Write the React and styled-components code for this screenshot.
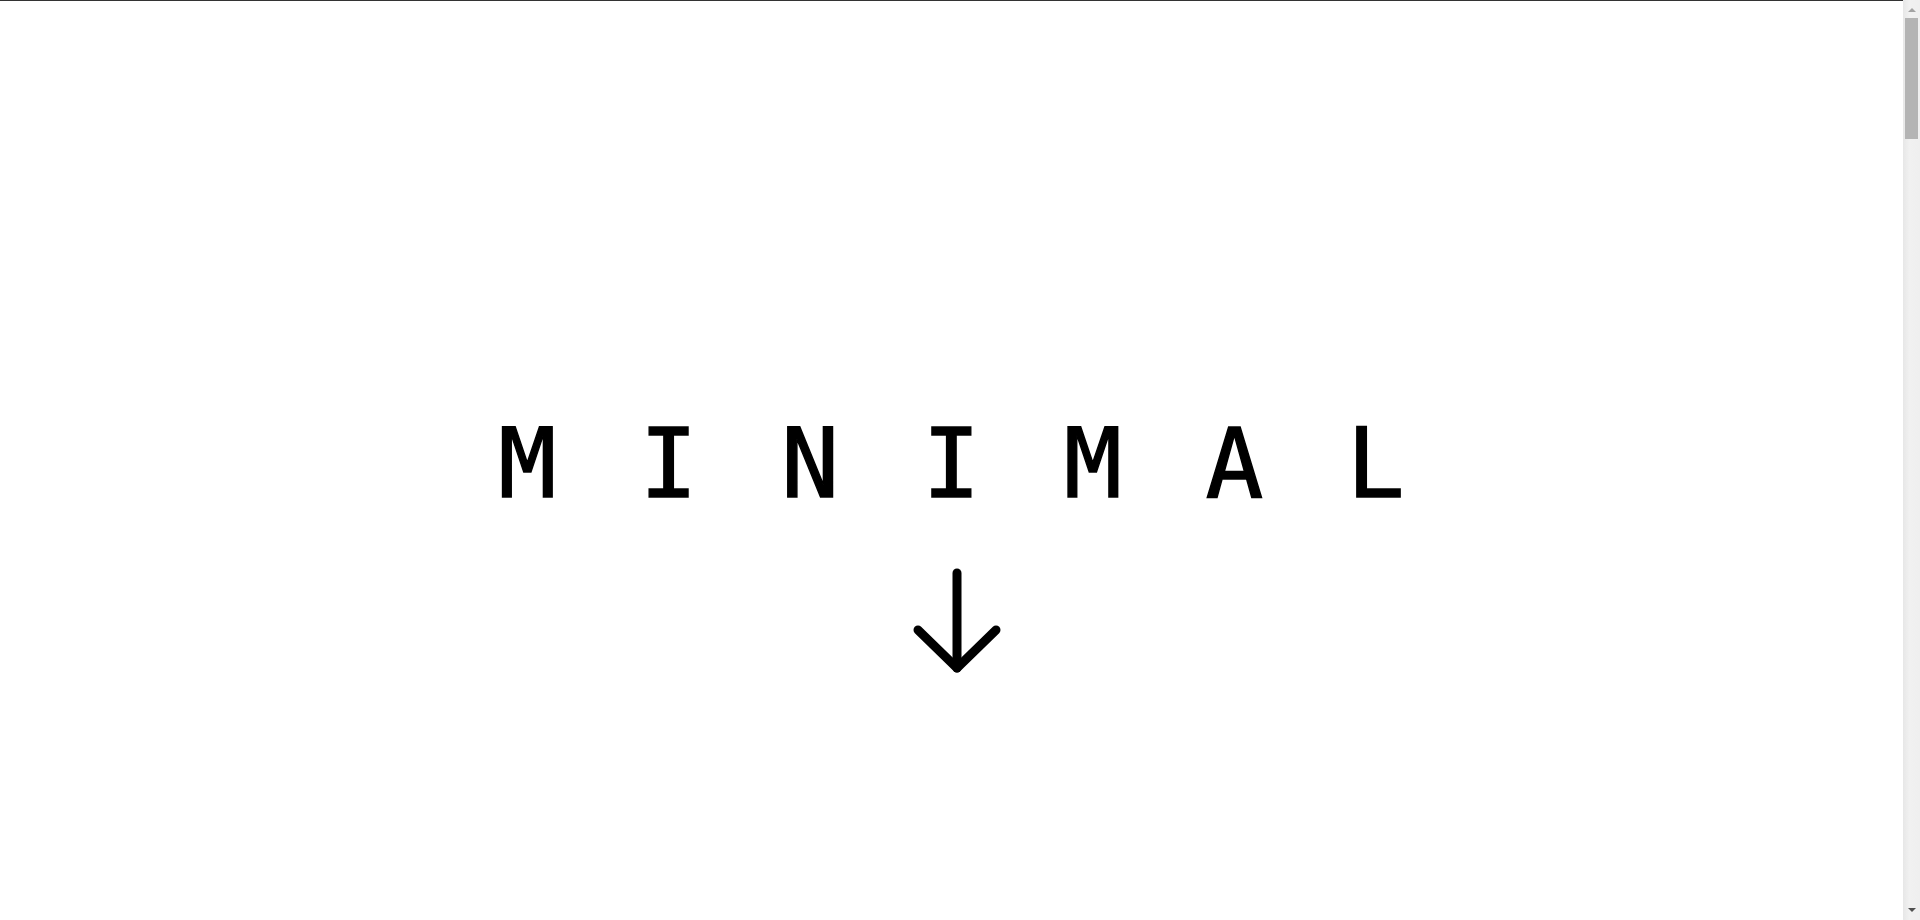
import React from "react";
import styled, { createGlobalStyle } from "styled-components";

const GlobalStyle = createGlobalStyle`
  html, body {
    margin: 0;
    padding: 0;
    height: 100%;
    overflow: hidden;
    background: #ffffff;
  }
  body {
    font-family: "DejaVu Sans Mono", monospace;
    color: #000000;
  }
`;

const Scroller = styled.div`
  height: 100vh;
  overflow-y: auto;
  overflow-x: hidden;
`;

const Page = styled.main`
  width: 100%;
  min-height: 6735px;
  display: flex;
  flex-direction: column;
  border-top: 1px solid #333333;
  padding-right: 17px;
  box-sizing: border-box;
`;

const Hero = styled.section`
  height: 919px;
  display: flex;
  flex-direction: column;
  align-items: center;
  padding-top: 415px;
  box-sizing: border-box;
`;

const Title = styled.h1`
  margin: 0;
  font-family: "DejaVu Sans Mono", monospace;
  font-weight: 400;
  font-size: 96px;
  line-height: 1;
  letter-spacing: 83.6px;
  padding-left: 83.6px;
  text-transform: uppercase;
  color: #000;
  -webkit-text-stroke: 1.4px #000;
`;

const ScrollArrow = styled.a`
  display: block;
  margin-top: 56px;
  margin-left: 11px;
  width: 90px;
  height: 106px;
  color: #000;
  cursor: pointer;
`;

const Below = styled.section`
  flex: 1;
`;

/* scrollbar drawn over the right edge, as in the reference */
const Rail = styled.div`
  position: fixed;
  top: 0;
  right: 0;
  bottom: 0;
  width: 17px;
  display: flex;
  flex-direction: column;
  background: linear-gradient(to right, #e7e7e7, #f1f1f1 40%, #efefef);
  z-index: 10;
`;

const RailButton = styled.div`
  height: 17px;
  display: flex;
  align-items: center;
  justify-content: center;

  &::after {
    content: "";
    width: 0;
    height: 0;
    border-left: 4px solid transparent;
    border-right: 4px solid transparent;
    ${(p) =>
      p.$dir === "up"
        ? "border-bottom: 4px solid #a3a3a3; margin-top: 2px;"
        : "border-top: 4px solid #505050; margin-top: -4px;"}
  }
`;

const Track = styled.div`
  flex: 1;
  padding: 1px 2px 0;
`;

const Thumb = styled.div`
  height: 121px;
  background: #b4b4b4;
`;

const ArrowDown = () => (
  <svg width="90" height="106" viewBox="0 0 90 106" fill="none" stroke="currentColor" strokeWidth="9" strokeLinecap="round" strokeLinejoin="round">
    <path d="M45 5 V100" />
    <path d="M6 62 L45 100 L84 62" />
  </svg>
);

export default function App() {
  return (
    <>
      <GlobalStyle />
      <Scroller>
        <Page>
          <Hero>
            <Title>Minimal</Title>
            <ScrollArrow href="#content" aria-label="Scroll down">
              <ArrowDown />
            </ScrollArrow>
          </Hero>
          <Below id="content" />
        </Page>
      </Scroller>
      <Rail aria-hidden="true">
        <RailButton $dir="up" />
        <Track>
          <Thumb />
        </Track>
        <RailButton $dir="down" />
      </Rail>
    </>
  );
}
